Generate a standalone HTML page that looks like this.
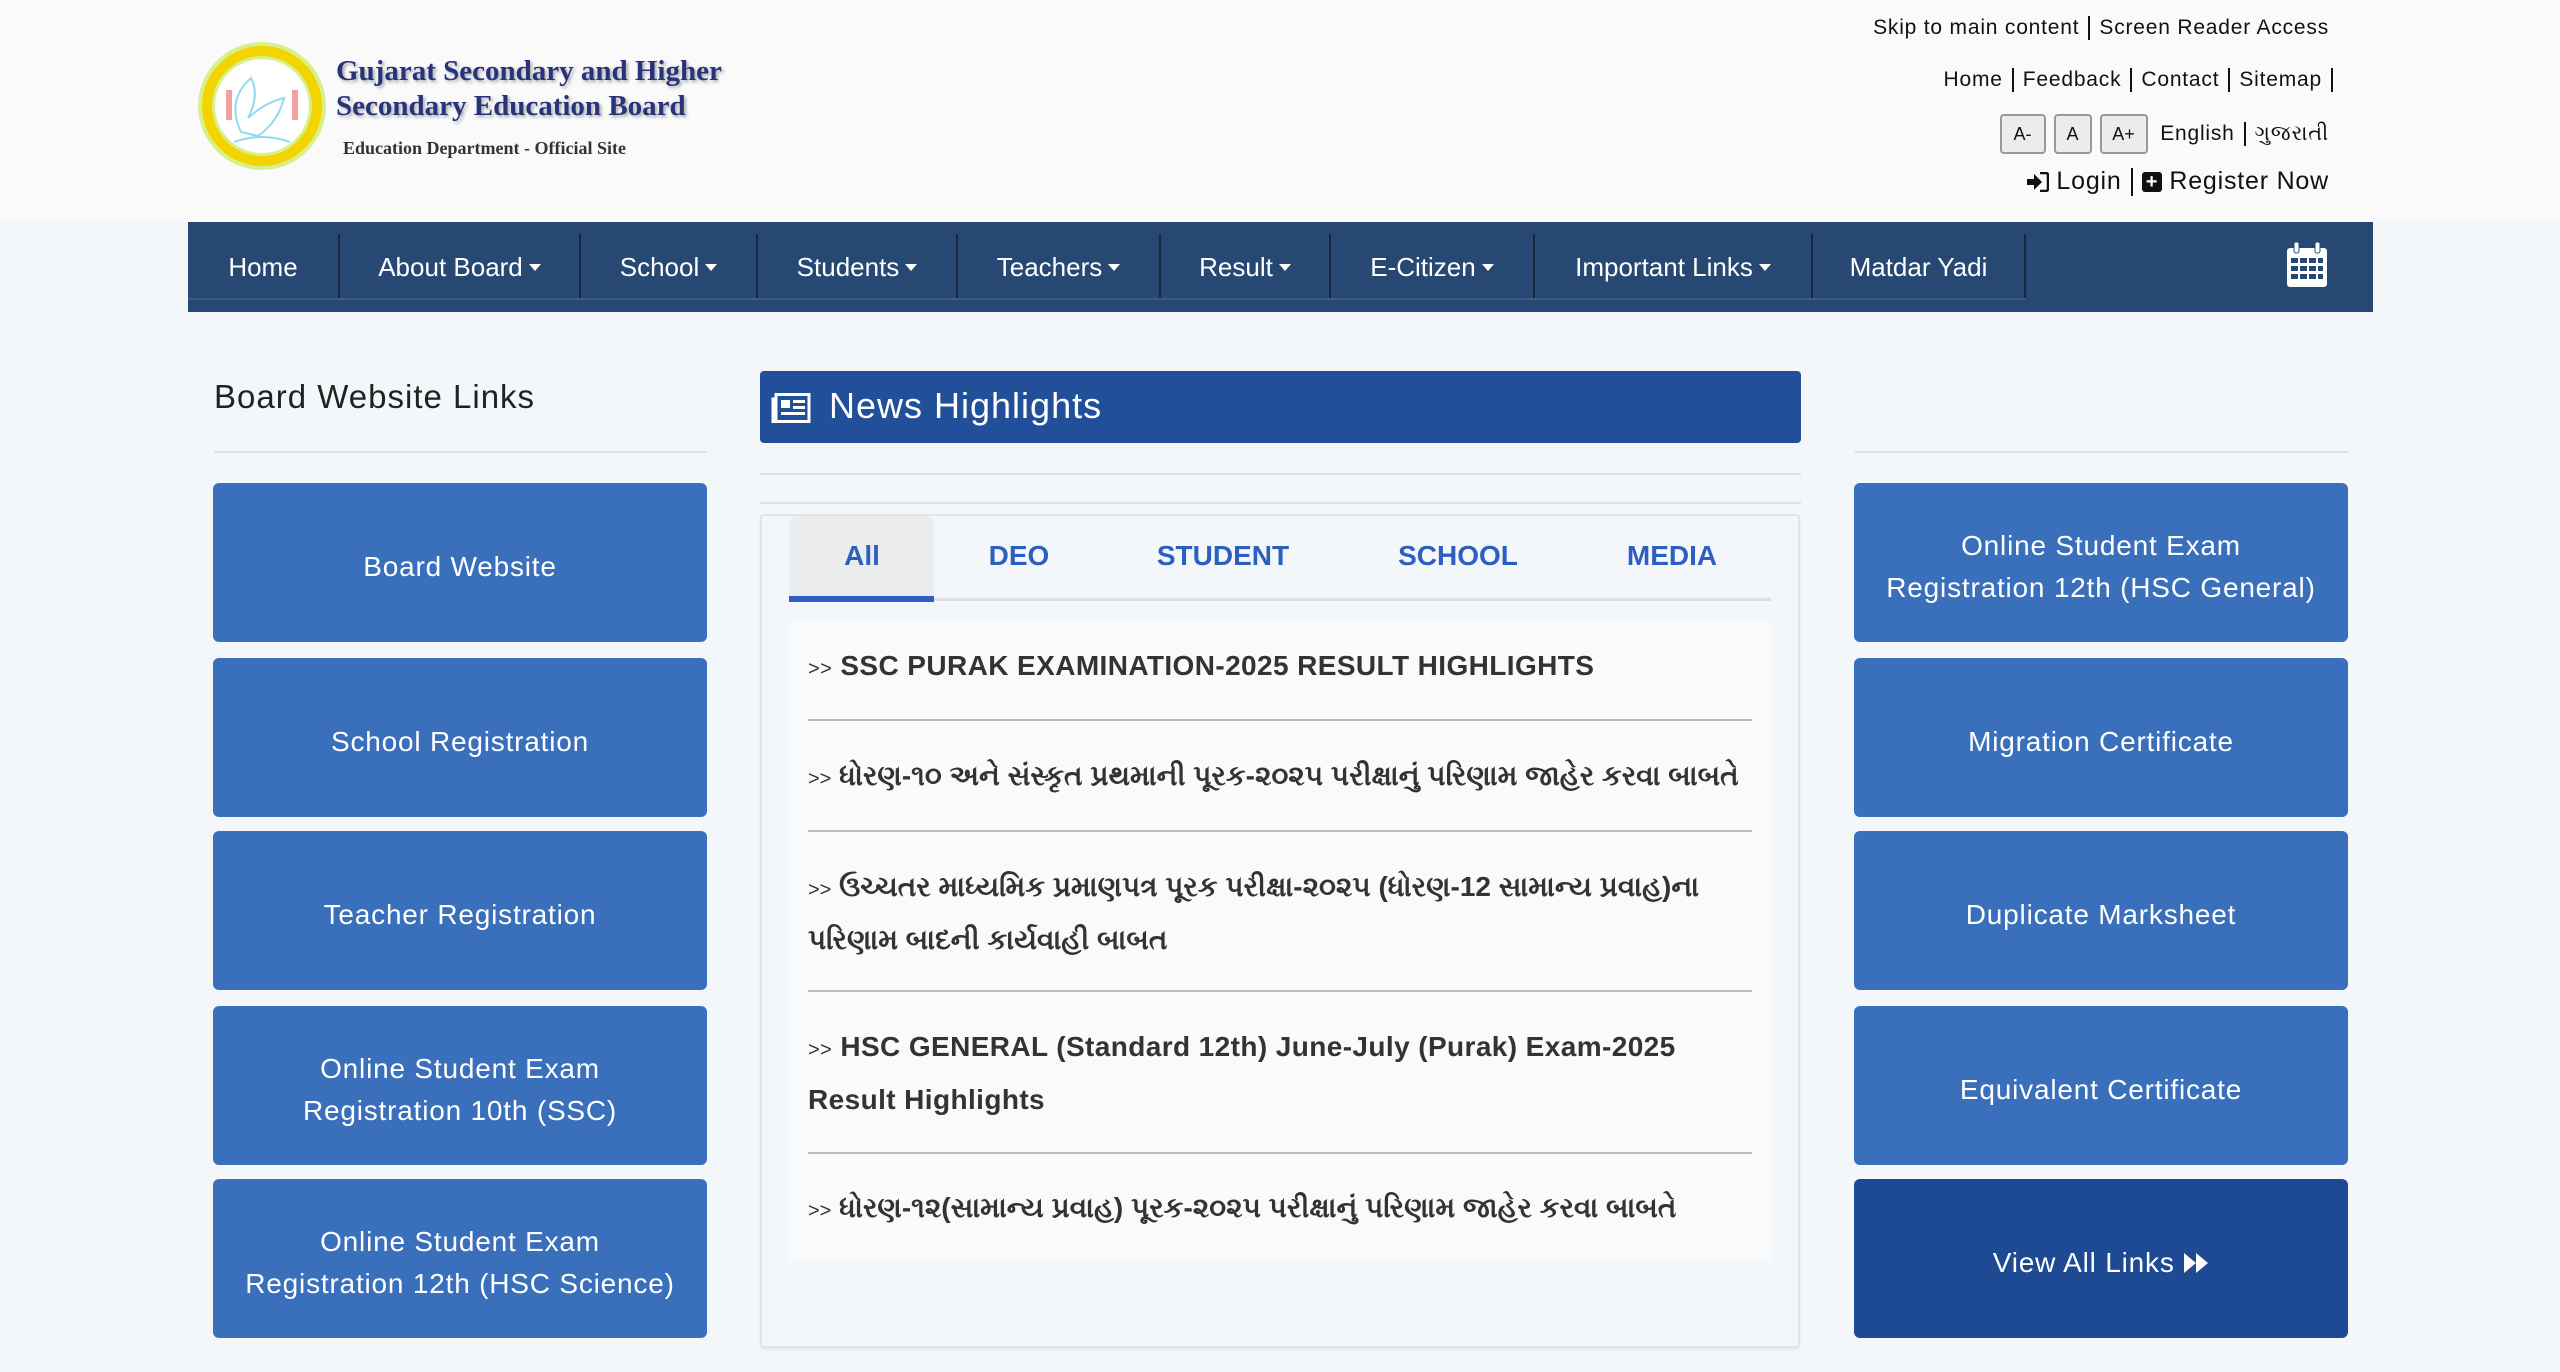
<!DOCTYPE html>
<html><head><meta charset="utf-8">
<style>
*{box-sizing:border-box;margin:0;padding:0}
body{width:2560px;height:1372px;overflow:hidden;background:#f3f7f9;font-family:"Liberation Sans","Noto Sans CJK SC",sans-serif;position:relative;color:#222}
.a{position:absolute}
.hdr{left:0;top:0;width:2560px;height:222px;background:#fafafa}
.tr{right:231px;text-align:right;font-size:21px;color:#111;white-space:nowrap;letter-spacing:.8px}
.sep{display:inline-block;width:2px;height:24px;background:#111;vertical-align:middle;margin:0 9px}
.fb{display:inline-block;border:2px solid #999;border-radius:4px;background:#ececec;height:40px;line-height:36px;font-size:18px;text-align:center;vertical-align:middle;margin-left:8px;letter-spacing:0}
nav{left:188px;top:222px;width:2185px;height:90px;background:#264872}
.ni{position:absolute;top:12px;height:66px;line-height:66px;color:#fff;font-size:26px;text-align:center;border-right:2px solid #18283c}
.car{display:inline-block;border-left:6px solid transparent;border-right:6px solid transparent;border-top:7px solid #fff;vertical-align:middle;margin-left:6px;margin-top:-4px}
.btn{position:absolute;width:494px;height:159px;padding-top:8px;background:#3a70bb;border-radius:6px;color:#fff;font-size:28px;display:flex;align-items:center;justify-content:center;text-align:center;line-height:42px;letter-spacing:.8px}
.hr{position:absolute;height:2px;background:#dfe2e5}
.tab{position:absolute;top:540px;font-size:28px;font-weight:bold;color:#2c5fc0;transform:translateX(-50%)}
.it{position:absolute;left:808px;width:930px;font-size:28px;font-weight:bold;color:#333;line-height:50px;letter-spacing:.4px}
.it small{font-size:20px;font-weight:normal}
.ihr{position:absolute;left:808px;width:944px;height:2px;background:#bbb}
</style></head><body>
<div class="a hdr"></div>
<svg class="a" style="left:196px;top:40px" width="132" height="132" viewBox="0 0 132 132">
<circle cx="66" cy="66" r="64" fill="#d9f08a"/><circle cx="66" cy="66" r="60" fill="#f3d400"/><circle cx="66" cy="66" r="50" fill="#d9f08a"/><circle cx="66" cy="66" r="47" fill="#fff"/>
<path d="M45 92 Q30 60 55 38 Q64 55 52 78 Q70 62 88 58 Q82 82 62 96 Z" fill="none" stroke="#8fdcef" stroke-width="2"/>
<path d="M38 102 Q66 92 94 102" stroke="#8fdcef" stroke-width="2" fill="none"/>
<rect x="30" y="50" width="6" height="30" fill="#f2a0a0"/><rect x="96" y="50" width="6" height="30" fill="#f2a0a0"/>
</svg>
<div class="a" style="left:336px;top:54px;font-family:'Liberation Serif',serif;font-weight:bold;font-size:29px;line-height:35px;color:#27337a;text-shadow:2px 2px 3px #aaa">Gujarat Secondary and Higher<br>Secondary Education Board</div>
<div class="a" style="left:343px;top:138px;font-family:'Liberation Serif',serif;font-weight:bold;font-size:18px;color:#333">Education Department - Official Site</div>

<div class="a tr" style="top:16px">Skip to main content<span class="sep"></span>Screen Reader Access</div>
<div class="a tr" style="top:68px;right:218px">Home<span class="sep"></span>Feedback<span class="sep"></span>Contact<span class="sep"></span>Sitemap<span class="sep"></span></div>
<div class="a tr" style="top:114px"><span class="fb" style="width:46px">A-</span><span class="fb" style="width:38px">A</span><span class="fb" style="width:48px">A+</span> <span style="vertical-align:middle;margin-left:6px">English</span><span class="sep"></span><span style="vertical-align:middle">ગુજરાતી</span></div>
<div class="a tr" style="top:167px;font-size:25px"><svg width="22" height="20" viewBox="0 0 22 20" style="vertical-align:middle"><path d="M0 7h7V2l8 8-8 8v-5H0z" fill="#111"/><path d="M13 1h6a2 2 0 0 1 2 2v14a2 2 0 0 1-2 2h-6" fill="none" stroke="#111" stroke-width="2.5"/></svg> Login<span class="sep" style="height:28px"></span><span style="display:inline-block;width:20px;height:20px;background:#111;color:#fff;border-radius:3px;font-size:20px;line-height:20px;text-align:center;font-weight:bold;vertical-align:middle;letter-spacing:0">+</span> Register Now</div>

<nav class="a">
<div class="ni" style="left:0;width:152px">Home</div>
<div class="ni" style="left:152px;width:241px">About Board<span class="car"></span></div>
<div class="ni" style="left:393px;width:177px">School<span class="car"></span></div>
<div class="ni" style="left:570px;width:200px">Students<span class="car"></span></div>
<div class="ni" style="left:770px;width:203px">Teachers<span class="car"></span></div>
<div class="ni" style="left:973px;width:170px">Result<span class="car"></span></div>
<div class="ni" style="left:1143px;width:204px">E-Citizen<span class="car"></span></div>
<div class="ni" style="left:1347px;width:278px">Important Links<span class="car"></span></div>
<div class="ni" style="left:1625px;width:213px">Matdar Yadi</div>
<div class="a" style="left:0;top:76px;width:1838px;height:2px;background:#3a5a80"></div>
<svg class="a" style="left:2098px;top:20px" width="42" height="46" viewBox="0 0 42 46"><rect x="1" y="6" width="40" height="39" rx="3" fill="#fff"/><rect x="8" y="0" width="5" height="11" rx="2" fill="#fff" stroke="#264872" stroke-width="1"/><rect x="29" y="0" width="5" height="11" rx="2" fill="#fff" stroke="#264872" stroke-width="1"/>
<g fill="#264872"><rect x="5" y="16" width="7" height="5"/><rect x="14" y="16" width="7" height="5"/><rect x="23" y="16" width="7" height="5"/><rect x="32" y="16" width="5" height="5"/><rect x="5" y="24" width="7" height="5"/><rect x="14" y="24" width="7" height="5"/><rect x="23" y="24" width="7" height="5"/><rect x="32" y="24" width="5" height="5"/><rect x="5" y="32" width="7" height="5"/><rect x="14" y="32" width="7" height="5"/><rect x="23" y="32" width="7" height="5"/><rect x="32" y="32" width="5" height="5"/></g></svg>
</nav>

<div class="a" style="left:214px;top:378px;font-size:33px;color:#222;letter-spacing:1px">Board Website Links</div>
<div class="hr" style="left:214px;top:451px;width:493px"></div>
<div class="btn" style="left:213px;top:483px">Board Website</div>
<div class="btn" style="left:213px;top:658px">School Registration</div>
<div class="btn" style="left:213px;top:831px">Teacher Registration</div>
<div class="btn" style="left:213px;top:1006px">Online Student Exam<br>Registration 10th (SSC)</div>
<div class="btn" style="left:213px;top:1179px">Online Student Exam<br>Registration 12th (HSC Science)</div>

<div class="hr" style="left:1855px;top:451px;width:493px"></div>
<div class="btn" style="left:1854px;top:483px">Online Student Exam<br>Registration 12th (HSC General)</div>
<div class="btn" style="left:1854px;top:658px">Migration Certificate</div>
<div class="btn" style="left:1854px;top:831px">Duplicate Marksheet</div>
<div class="btn" style="left:1854px;top:1006px">Equivalent Certificate</div>
<div class="btn" style="left:1854px;top:1179px;background:#1e4a94">View All Links&nbsp;<svg width="26" height="24" viewBox="0 0 26 24"><path d="M1 2l12 10-12 10z M13 2l12 10-12 10z" fill="#fff"/></svg></div>

<div class="a" style="left:760px;top:371px;width:1041px;height:72px;background:#214f9a;border-radius:4px"></div>
<svg class="a" style="left:771px;top:393px" width="40" height="30" viewBox="0 0 40 30"><rect x="5" y="1.5" width="33" height="27" fill="none" stroke="#fff" stroke-width="3"/><path d="M5 6 H2 V28.5 H5" fill="none" stroke="#fff" stroke-width="3"/><rect x="10" y="7" width="9" height="8" fill="#fff"/><rect x="22" y="7" width="12" height="3" fill="#fff"/><rect x="22" y="13" width="12" height="3" fill="#fff"/><rect x="10" y="19" width="24" height="3" fill="#fff"/></svg>
<div class="a" style="left:829px;top:385px;font-size:36px;color:#fff;letter-spacing:1px">News Highlights</div>
<div class="hr" style="left:760px;top:473px;width:1041px"></div>
<div class="hr" style="left:760px;top:502px;width:1041px"></div>
<div class="a" style="left:760px;top:514px;width:1040px;height:834px;border:2px solid #e2e4e6;border-radius:4px;background:#f4f7f9;box-shadow:0 2px 4px rgba(0,0,0,.06)"></div>
<div class="a" style="left:789px;top:516px;width:145px;height:86px;background:#ebeced;border-radius:8px 8px 0 0"></div>
<div class="a" style="left:789px;top:598px;width:982px;height:3px;background:#dcdfe2"></div>
<div class="a" style="left:789px;top:596px;width:145px;height:6px;background:#2c5fc0"></div>
<div class="tab" style="left:862px">All</div>
<div class="tab" style="left:1019px">DEO</div>
<div class="tab" style="left:1223px">STUDENT</div>
<div class="tab" style="left:1458px">SCHOOL</div>
<div class="tab" style="left:1672px">MEDIA</div>
<div class="a" style="left:789px;top:621px;width:982px;height:640px;background:#f8fafb"></div>
<div class="it" style="top:641px"><small>&gt;&gt;</small> SSC PURAK EXAMINATION-2025 RESULT HIGHLIGHTS</div>
<div class="ihr" style="top:719px"></div>
<div class="it" style="top:751px;letter-spacing:0;width:960px;white-space:nowrap"><small>&gt;&gt;</small> ધોરણ-૧૦ અને સંસ્કૃત પ્રથમાની પૂરક-૨૦૨૫ પરીક્ષાનું પરિણામ જાહેર કરવા બાબતે</div>
<div class="ihr" style="top:830px"></div>
<div class="it" style="top:862px;letter-spacing:0"><small>&gt;&gt;</small> ઉચ્ચતર માધ્યમિક પ્રમાણપત્ર પૂરક પરીક્ષા-૨૦૨૫ (ધોરણ-12 સામાન્ય પ્રવાહ)ના પરિણામ બાદની કાર્યવાહી બાબત</div>
<div class="ihr" style="top:990px"></div>
<div class="it" style="top:1022px"><small>&gt;&gt;</small> HSC GENERAL (Standard 12th) June-July (Purak) Exam-2025<br>Result Highlights</div>
<div class="ihr" style="top:1152px"></div>
<div class="it" style="top:1183px;letter-spacing:0;white-space:nowrap"><small>&gt;&gt;</small> ધોરણ-૧૨(સામાન્ય પ્રવાહ) પૂરક-૨૦૨૫ પરીક્ષાનું પરિણામ જાહેર કરવા બાબતે</div>
</body></html>
